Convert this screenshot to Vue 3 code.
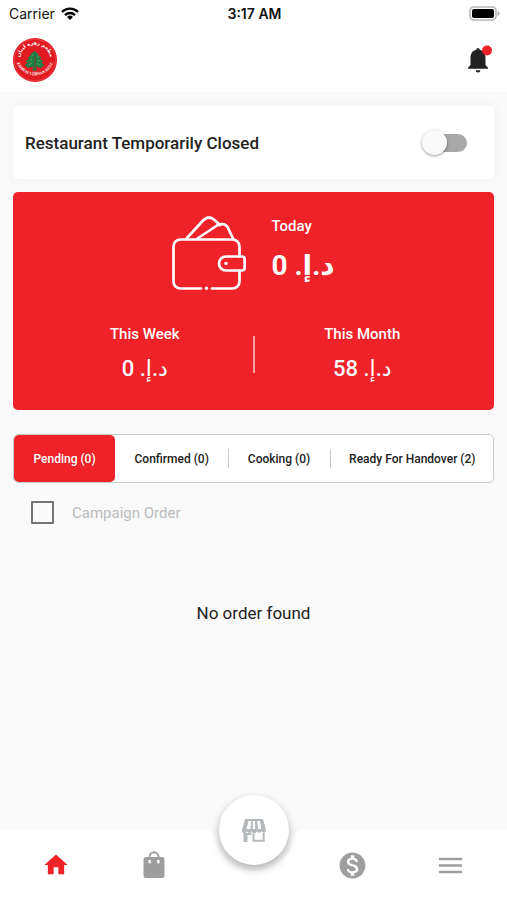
<template>
  <div class="screen">
    <header class="top">
      <div class="status-bar">
        <div class="carrier">
          <span>Carrier</span>
          <svg width="18" height="13" viewBox="0 0 18 13" aria-hidden="true">
            <g fill="none" stroke="#000" stroke-width="2.3">
              <path d="M1 5a11.3 11.3 0 0 1 16 0" />
              <path d="M4 8.1a7 7 0 0 1 10 0" />
            </g>
            <path d="M9 13 6 9.9a4.3 4.3 0 0 1 6 0z" />
          </svg>
        </div>
        <span class="clock">3:17 AM</span>
        <svg class="battery" width="31" height="15" viewBox="0 0 31 15" aria-hidden="true">
          <rect x="1" y="1" width="26" height="13" rx="4" fill="#fff" stroke="#b5b5b5" stroke-width="1.6" />
          <rect x="3" y="3" width="22" height="9" rx="2" />
          <path d="M28.500 5v5q2-.8 2-2.500t-2-2.500z" fill="#aaa" />
        </svg>
      </div>
      <div class="app-bar">
        <svg width="44" height="44" viewBox="0 0 44 44" role="img" aria-label="Zahrat Lebnan Rest.">
          <defs>
            <path id="arc-top" d="M6.500 22a15.500 15.500 0 0 1 31 0" />
            <path id="arc-bottom" d="M2.800 20a19.300 19.300 0 0 0 38.400 0" />
          </defs>
          <circle cx="22" cy="22" r="22" fill="#e21b23" />
          <circle cx="22" cy="22" r="20.600" fill="none" stroke="#f0696d" stroke-width=".4" />
          <text class="logo-ar" text-anchor="middle">
            <textPath href="#arc-top" startOffset="50%">مطعم زهرة لبنان</textPath>
          </text>
          <text class="logo-en" text-anchor="middle">
            <textPath href="#arc-bottom" startOffset="50%">ZAHRAT LEBNAN REST.</textPath>
          </text>
          <path
            d="M22 12.500l1.500 2.500 2.500 1-1 1.500 3.500 2-1.500 1 3.500 3-2 .8 3 3.700-3 .5.500 1.500-4.500-1-1.500-.5.500 4h-4l.5-4-1.500.5-4.500 1 .5-1.500-3-.5 3-3.700-2-.8 3.500-3-1.500-1 3.500-2-1-1.500 2.500-1z"
            fill="#1b7f45"
          />
          <path
            d="M20 17l-2 1.500M24 18l2 1.500M19 21l-2.500 2M24.500 22l3 1.500M19 25l-3 2M24 25.500l2.500 1.500"
            stroke="#7fae62"
            stroke-width=".7"
            fill="none"
          />
          <path d="M22 18v13" stroke="#8a3a2c" stroke-width=".8" />
          <path d="M19 34.300h6" stroke="#f7a5a5" stroke-width=".7" />
        </svg>
        <button class="bell" type="button" aria-label="Notifications">
          <svg width="28" height="30" viewBox="0 0 28 30">
            <path
              d="M12 3c1 0 1.500.7 1.700 1.800 3.900.9 5.800 4 5.800 8v7.200l2.500 2.800v1H2v-1L4.500 20v-7.200c0-4 1.900-7.100 5.800-8C10.500 3.700 11 3 12 3z"
              fill="#222"
            />
            <path d="M9.600 25.200h4.800a2.400 2.400 0 0 1-4.800 0z" fill="#222" />
            <circle cx="21" cy="5.500" r="5" fill="#ef2129" />
          </svg>
        </button>
      </div>
    </header>

    <main class="content">
      <section class="card closed-card">
        <label for="closed">Restaurant Temporarily Closed</label>
        <input id="closed" v-model="closed" class="switch" type="checkbox" role="switch" />
      </section>

      <section class="earnings">
        <div class="today">
          <svg width="74" height="74" viewBox="0 0 74 74" aria-hidden="true">
            <g fill="none" stroke="#fff" stroke-width="2.700" stroke-linecap="round" stroke-linejoin="round">
              <path d="M29 72.500H8.500a7 7 0 0 1-7-7v-35a7 7 0 0 1 7-7h52a7 7 0 0 1 7 7v10" />
              <path d="M67.500 54.500v11a7 7 0 0 1-7 7H40" />
              <path d="M14.500 22.500 31.500 4q5.500-5 11 0l5.500 5" />
              <path d="M25.500 22.500 45 9.500q8-3.500 11 2.500l5 10.500" />
              <path d="M54 40.500h16q2.600 0 2.600 2.600v9q0 2.400-2.600 2.400H54a7 7 0 0 1 0-14z" />
            </g>
            <circle cx="34.500" cy="72.300" r="1.700" fill="#fff" />
            <circle cx="54" cy="47.500" r="1.700" fill="#fff" />
          </svg>
          <div class="today-text">
            <span class="label">Today</span>
            <span class="amount big" dir="rtl">د.إ. 0</span>
          </div>
        </div>
        <div class="periods">
          <div class="period">
            <span class="label">This Week</span>
            <span class="amount" dir="rtl">د.إ. 0</span>
          </div>
          <span class="period-line"></span>
          <div class="period">
            <span class="label">This Month</span>
            <span class="amount" dir="rtl">د.إ. 58</span>
          </div>
        </div>
      </section>

      <div class="tabs" role="tablist">
        <button
          v-for="(tab, i) in tabs"
          :key="tab.name"
          type="button"
          role="tab"
          class="tab"
          :class="{ active: i === current, divided: i > 1 && i !== current }"
          :aria-selected="i === current"
          @click="current = i"
        >
          {{ tab.name }} ({{ tab.count }})
        </button>
      </div>

      <label class="campaign">
        <input v-model="campaign" type="checkbox" />
        <span>Campaign Order</span>
      </label>

      <p class="empty">No order found</p>
    </main>

    <nav class="bottom-nav">
      <div class="side left">
        <a href="#home" aria-label="Home">
          <svg width="28" height="28" viewBox="0 0 24 24">
            <path d="M10 20v-6h4v6h5v-8h3L12 3 2 12h3v8z" fill="#ef2129" />
          </svg>
        </a>
        <a href="#orders" aria-label="Orders">
          <svg width="28" height="28" viewBox="0 0 28 28">
            <path d="M9.500 7.500V5.800a4.500 4.500 0 0 1 9 0v1.700" fill="none" stroke="#9e9e9e" stroke-width="2" />
            <rect x="3.500" y="6" width="21" height="21" rx="2.500" fill="#9e9e9e" />
            <path d="M8.500 9h2.300v3.300H8.500zM17.200 9h2.300v3.300h-2.300z" fill="#fff" />
          </svg>
        </a>
      </div>
      <div class="notch">
        <svg width="100" height="70" viewBox="0 0 100 70" aria-hidden="true">
          <path d="M0 0q9 0 12 8a38 33 0 0 0 76 0q3-8 12-8v70H0z" fill="#fff" />
        </svg>
        <button class="fab" type="button" aria-label="Restaurant">
          <svg width="26" height="24" viewBox="0 0 26 24">
            <path d="M4 1h18l3 11H1z" fill="#b4b9bc" />
            <path d="M7.500 3h2.800l-.8 8H5.500zM12 3h2l.2 8h-2.500zM16.300 3h2.500l1.700 8h-3.400z" fill="#fff" />
            <path
              d="M1 11.500h24v1a2.300 2.300 0 0 1-4.500.5 2.500 2.500 0 0 1-4.800 0 2.500 2.500 0 0 1-5 0 2.500 2.500 0 0 1-4.900 0A2.400 2.400 0 0 1 1 12.500z"
              fill="#b4b9bc"
            />
            <path d="M2.500 15h8v2h-4v7h-4z" fill="#b4b9bc" />
            <path d="M12.500 16v6.800h10.200V15" fill="none" stroke="#b4b9bc" stroke-width="2" />
          </svg>
        </button>
      </div>
      <div class="side right">
        <a href="#wallet" aria-label="Wallet">
          <svg width="31" height="31" viewBox="0 0 24 24">
            <path
              d="M12 2C6.480 2 2 6.480 2 12s4.480 10 10 10 10-4.480 10-10S17.520 2 12 2zm1.410 16.090V20h-2.670v-1.930c-1.710-.36-3.160-1.460-3.270-3.400h1.960c.1 1.050.82 1.870 2.650 1.870 1.960 0 2.400-.98 2.400-1.590 0-.83-.44-1.610-2.670-2.140-2.480-.6-4.180-1.620-4.180-3.670 0-1.720 1.390-2.840 3.110-3.210V4h2.670v1.950c1.860.45 2.790 1.860 2.850 3.390H14.300c-.05-1.110-.64-1.870-2.220-1.870-1.500 0-2.400.68-2.400 1.640 0 .84.65 1.390 2.670 1.910s4.180 1.390 4.180 3.910c-.01 1.830-1.380 2.830-3.120 3.160z"
              fill="#9e9e9e"
            />
          </svg>
        </a>
        <a href="#menu" aria-label="Menu">
          <svg width="31" height="31" viewBox="0 0 24 24">
            <path d="M3 18h18v-2H3zm0-5h18v-2H3zm0-7v2h18V6z" fill="#9e9e9e" />
          </svg>
        </a>
      </div>
    </nav>
  </div>
</template>

<script setup>
import { ref } from 'vue';

const closed = ref(false);
const campaign = ref(false);
const current = ref(0);

const tabs = [
  { name: 'Pending', count: 0 },
  { name: 'Confirmed', count: 0 },
  { name: 'Cooking', count: 0 },
  { name: 'Ready For Handover', count: 2 }
];
</script>

<style>
body {
  background: #fafafa;
}
</style>

<style scoped>
.screen {
  display: flex;
  flex-direction: column;
  min-height: 100vh;
  font-family: Roboto, "DejaVu Sans", sans-serif;
  color: #222;
}

svg {
  display: block;
}

button {
  border: 0;
  padding: 0;
  background: none;
  font: inherit;
  color: inherit;
  cursor: pointer;
}

/* header */
.top {
  background: #fff;
}

.status-bar {
  display: grid;
  grid-template-columns: 1fr auto 1fr;
  align-items: center;
  height: 27px;
  padding: 0 7px 0 9px;
  font-family: Inter, sans-serif;
  font-size: 14px;
  color: #111;
}

.carrier {
  display: flex;
  align-items: center;
  gap: 6px;
}

.clock {
  font-weight: 600;
}

.battery {
  justify-self: end;
}

.app-bar {
  display: flex;
  align-items: center;
  justify-content: space-between;
  height: 65px;
  padding: 0 13px;
}

.logo-ar {
  font: bold 5px "DejaVu Sans", sans-serif;
  fill: #fff;
}

.logo-en {
  font: bold 4px "Liberation Serif", serif;
  fill: #fff;
}

/* content */
.content {
  flex: 1;
  padding: 14px 13px;
}

.closed-card {
  display: flex;
  align-items: center;
  justify-content: space-between;
  height: 73px;
  padding: 0 27px 0 12px;
  border-radius: 5px;
  background: #fff;
  box-shadow: 0 0 8px 1px #f2f2f2;
  font-size: 17px;
  font-weight: 500;
}

.switch {
  appearance: none;
  display: flex;
  align-items: center;
  width: 39px;
  height: 18px;
  margin: 0;
  border-radius: 9px;
  background: #a8a8a8;
  cursor: pointer;
}

.switch::before {
  content: "";
  flex: none;
  width: 25px;
  height: 25px;
  margin-left: -6px;
  border-radius: 50%;
  background: #fafafa;
  box-shadow: 0 1px 3px rgba(0, 0, 0, 0.4);
}

.switch:checked::before {
  margin-left: 20px;
}

.earnings {
  margin-top: 13px;
  padding: 24px 24px 26px;
  border-radius: 5px;
  background: #ef2129;
  color: #fff;
}

.today {
  display: flex;
  justify-content: center;
  gap: 25px;
}

.today-text {
  display: flex;
  flex-direction: column;
  align-items: flex-start;
}

.label {
  font-size: 15px;
  line-height: 20px;
  font-weight: 500;
}

.amount {
  font-size: 22px;
  line-height: 30px;
  font-weight: 500;
}

.amount.big {
  margin-top: 10px;
  font-size: 28px;
  line-height: 40px;
  font-weight: 700;
}

.periods {
  display: flex;
  align-items: center;
  margin-top: 34px;
}

.period {
  display: flex;
  flex: 1;
  flex-direction: column;
  align-items: center;
  gap: 10px;
}

.period-line {
  width: 2px;
  height: 37px;
  background: #f8a0a3;
}

.tabs {
  display: flex;
  height: 49px;
  box-sizing: border-box;
  margin-top: 24px;
  border: 1px solid #c8cacb;
  border-radius: 5px;
  background: #fff;
}

.tab {
  display: flex;
  align-items: center;
  justify-content: center;
  flex: 1 0 auto;
  padding: 0 17px;
  font-size: 12px;
  font-weight: 500;
  white-space: nowrap;
}

.tab:last-child {
  padding-right: 15px;
}

.tab.active {
  border-radius: 5px;
  background: #ef2129;
  color: #fff;
}

.tab.divided {
  background: linear-gradient(#c8cacb, #c8cacb) left center / 1px 19px no-repeat;
}

.campaign {
  display: flex;
  align-items: center;
  gap: 18px;
  width: fit-content;
  margin: 18px 0 0 18px;
  font-size: 15px;
  color: #b9bcbe;
}

.campaign input {
  appearance: none;
  width: 23px;
  height: 23px;
  box-sizing: border-box;
  margin: 0;
  border: 2px solid #757575;
  border-radius: 1px;
}

.campaign input:checked {
  background: #ef2129;
}

.empty {
  margin: 78px 0 0;
  font-size: 17px;
  line-height: 22px;
  text-align: center;
}

/* bottom bar */
.bottom-nav {
  display: flex;
  height: 70px;
}

.side {
  display: flex;
  flex: 1;
  align-items: center;
  justify-content: space-around;
  background: #fff;
}

.side.left {
  padding-left: 7px;
}

.side.right {
  padding-right: 7px;
}

.notch {
  position: relative;
  width: 100px;
}

.fab {
  position: absolute;
  top: -35px;
  left: 15px;
  display: flex;
  align-items: center;
  justify-content: center;
  width: 70px;
  height: 70px;
  border-radius: 50%;
  background: #fff;
  box-shadow: 0 4px 8px rgba(0, 0, 0, 0.3);
}
</style>
